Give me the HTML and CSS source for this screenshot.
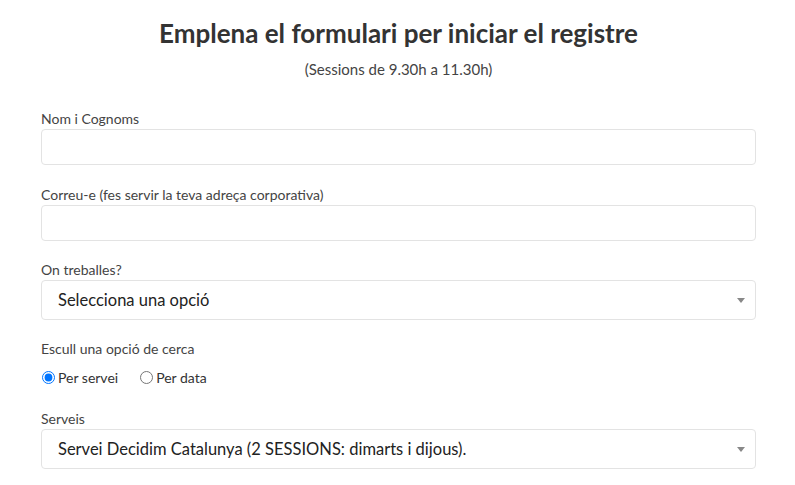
FILE: index.html
```html
<!DOCTYPE html>
<html lang="ca">
<head>
<meta charset="utf-8">
<title>Registre</title>
<link rel="stylesheet" href="styles.css">
</head>
<body>
<div class="page">
  <h1 class="title">Emplena el formulari per iniciar el registre</h1>
  <p class="subtitle">(Sessions de 9.30h a 11.30h)</p>
  <form class="form">
    <div class="group group-first">
      <label class="label">Nom i Cognoms</label>
      <div class="input"></div>
    </div>
    <div class="group">
      <label class="label">Correu-e (fes servir la teva adreça corporativa)</label>
      <div class="input"></div>
    </div>
    <div class="group">
      <label class="label">On treballes?</label>
      <div class="select"><span>Selecciona una opció</span><span class="arrow"></span></div>
    </div>
    <div class="group group-radios">
      <label class="label">Escull una opció de cerca</label>
      <div class="radios">
        <label class="radio"><input type="radio" name="cerca" checked> Per servei</label>
        <label class="radio"><input type="radio" name="cerca"> Per data</label>
      </div>
    </div>
    <div class="group">
      <label class="label">Serveis</label>
      <div class="select"><span>Servei Decidim Catalunya (2 SESSIONS: dimarts i dijous).</span><span class="arrow"></span></div>
    </div>
  </form>
</div>
</body>
</html>
```
FILE: styles.css
```css
* { box-sizing: border-box; }
body {
  margin: 0;
  background: #fff;
  font-family: "Lato", "Open Sans", sans-serif;
  color: #444;
}
.page {
  padding: 18px 39px 0 41px;
}
.title {
  margin: 0;
  text-align: center;
  font-size: 26px;
  line-height: 30px;
  font-weight: 700;
  color: #333;
}
.subtitle {
  margin: 11px 0 0;
  text-align: center;
  font-size: 15px;
  line-height: 20px;
  color: #444;
}
.form {
  margin-top: 32px;
  display: flex;
  flex-direction: column;
  gap: 21px;
}
.group {
  display: flex;
  flex-direction: column;
}
.group-first {
  margin-bottom: 1px;
}
.group-radios {
  margin-bottom: 4px;
}
.label {
  font-size: 14px;
  line-height: 16px;
  color: #444;
  margin-bottom: 2px;
}
.input {
  height: 36px;
  border: 1px solid #e3e3e3;
  border-radius: 4px;
}
.select {
  height: 40px;
  border: 1px solid #e3e3e3;
  border-radius: 4px;
  display: flex;
  align-items: center;
  justify-content: space-between;
  padding: 0 10px 0 16px;
  font-size: 16.5px;
  color: #222;
}
.arrow {
  width: 0;
  height: 0;
  border-left: 4px solid transparent;
  border-right: 4px solid transparent;
  border-top: 5px solid #888;
}
.radios {
  display: flex;
  gap: 21px;
  margin-top: 10px;
  font-size: 14px;
  color: #333;
}
.radio {
  display: flex;
  align-items: center;
  gap: 3px;
}
.radio input {
  margin: 0 0 0 1px;
  width: 13px;
  height: 13px;
}
```
